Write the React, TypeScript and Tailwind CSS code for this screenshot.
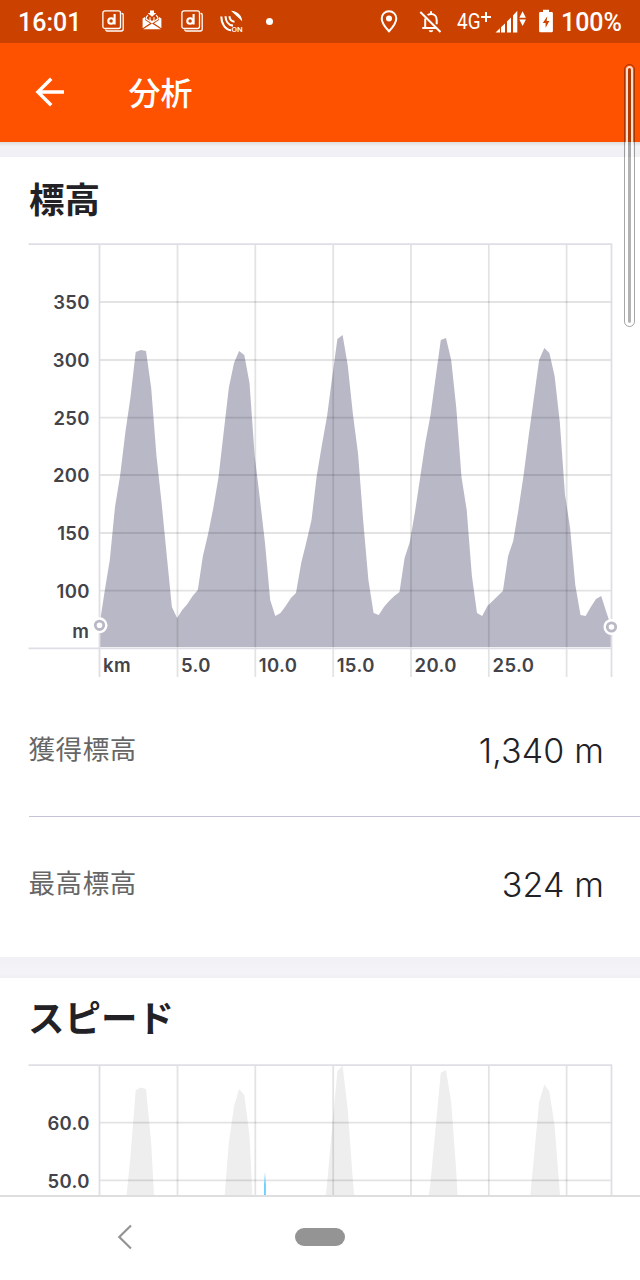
import type { ReactNode } from "react";

const PLOT_LEFT = 99.5;
const PLOT_WIDTH = 512;
const LINES_X = [177.5, 255.3, 333.2, 411, 488.8, 566.6];

// Depth of each sample below the top edge of the elevation plot
const profile = [
  381, 347, 316, 263, 231, 188, 153, 108, 106, 107,
  144, 211, 259, 311, 363, 374, 366, 360, 352, 346,
  312, 290, 264, 234, 189, 144, 119, 107, 111, 139,
  212, 254, 299, 356, 372, 369, 362, 354, 349, 319,
  298, 276, 232, 201, 172, 133, 95, 91, 121, 170,
  210, 278, 336, 369, 371, 363, 357, 352, 348, 314,
  298, 268, 234, 199, 171, 133, 96, 94, 116, 164,
  233, 266, 332, 369, 372, 362, 357, 352, 347, 312,
  297, 266, 231, 191, 154, 116, 104, 109, 132, 178,
  251, 284, 341, 371, 372, 363, 355, 352, 368, 383
];

const elevationTicks = [
  { label: "350", y: 58 },
  { label: "300", y: 116 },
  { label: "250", y: 173.7 },
  { label: "200", y: 231 },
  { label: "150", y: 289 },
  { label: "100", y: 346.7 }
];

const speedTicks = [
  { label: "60.0", y: 57.7 },
  { label: "50.0", y: 115.4 }
];

const distanceTicks = ["km", "5.0", "10.0", "15.0", "20.0", "25.0"];

const areaPath = (base: number, toY: (v: number) => number) => {
  const step = PLOT_WIDTH / (profile.length - 1);
  const points = profile.map((v, i) => `${(PLOT_LEFT + i * step).toFixed(1)} ${toY(v).toFixed(1)}`);
  return `M${PLOT_LEFT} ${base}L${points.join("L")}L${PLOT_LEFT + PLOT_WIDTH} ${base}Z`;
};

const Marker = ({ x, y }: { x: number; y: number }) => (
  <g>
    <circle cx={x} cy={y} r="8" fill="#fff" />
    <circle cx={x} cy={y} r="4.2" fill="#fff" stroke="#b9b8c6" strokeWidth="2.8" />
  </g>
);

const TickLabel = ({ x, y, end, children }: { x: number; y: number; end?: boolean; children: ReactNode }) => (
  <text
    x={x}
    y={y}
    textAnchor={end ? "end" : "start"}
    className="font-['Inter',sans-serif] text-[18.5px] font-semibold tracking-[.35px]"
    fill="#434349"
  >
    {children}
  </text>
);

const ElevationChart = () => (
  <svg width="640" height="436" viewBox="0 -1 640 436" className="block">
    <path d={areaPath(403, (v) => v)} fill="#b9b8c6" />
    <g stroke="#000" strokeOpacity="0.11" strokeWidth="1.8">
      {elevationTicks.map((t) => (
        <line key={t.label} x1="100" x2="611" y1={t.y} y2={t.y} />
      ))}
      {LINES_X.map((x) => (
        <line key={x} x1={x} x2={x} y1="1" y2="433" />
      ))}
    </g>
    <g stroke="#dfdee7" strokeWidth="1.8">
      <path d="M28.5 .2H612.3M28.5 404.3H612M99.5 0V433M611.5 0V433" fill="none" />
    </g>
    {elevationTicks.map((t) => (
      <TickLabel key={t.label} x={89.9} y={t.y + 7.3} end>{t.label}</TickLabel>
    ))}
    <TickLabel x={89.3} y={394} end>m</TickLabel>
    {distanceTicks.map((label, i) => (
      <TickLabel key={label} x={103 + i * 77.9} y={428}>{label}</TickLabel>
    ))}
    <Marker x={99.5} y={381.3} />
    <Marker x={611.5} y={383} />
  </svg>
);

const SpeedChart = () => (
  <svg width="640" height="132" viewBox="0 -1 640 132" className="block">
    <path d={areaPath(600, (v) => (v - 91) * 1.46 + 0.5)} fill="#eee" />
    <g stroke="#000" strokeOpacity="0.11" strokeWidth="1.8">
      {speedTicks.map((t) => (
        <line key={t.label} x1="100" x2="611" y1={t.y} y2={t.y} />
      ))}
      {LINES_X.map((x) => (
        <line key={x} x1={x} x2={x} y1="1" y2="140" />
      ))}
    </g>
    <path d="M28.5 .1H612.3M99.5 0V140M611.5 0V140" stroke="#dfdee7" strokeWidth="1.8" fill="none" />
    <defs>
      <linearGradient id="spike" x1="0" x2="0" y1="0" y2="1">
        <stop offset="0" stopColor="#6fd0fb" stopOpacity="0" />
        <stop offset="0.5" stopColor="#6fd0fb" />
      </linearGradient>
    </defs>
    <rect x="264" y="107" width="1.9" height="25" fill="url(#spike)" />
    {speedTicks.map((t) => (
      <TickLabel key={t.label} x={89.9} y={t.y + 7.3} end>{t.label}</TickLabel>
    ))}
  </svg>
);

const MusicIcon = () => (
  <svg width="22" height="22" viewBox="0 0 22 22" fill="none" stroke="#fff" strokeWidth="1.3">
    <rect x=".9" y=".9" width="17.6" height="17.6" rx="2" />
    <path d="M19.5 3.5H20a1.2 1.2 0 0 1 1.2 1.2V19a2 2 0 0 1-2 2H5a1.2 1.2 0 0 1-1.2-1.2V19.5" />
    <circle cx="9.1" cy="11" r="2.8" strokeWidth="2.1" />
    <path d="M12.6 4v10.5" strokeWidth="2.1" />
  </svg>
);

const MailIcon = () => (
  <svg width="20" height="20" viewBox="0 0 20 20">
    <path d="M.6 8.600 3 7v3l5 3.300-7.400 5zM19.400 8.600 17 7v3l-5 3.300 7.400 5z" fill="#fff" />
    <path d="M1.200 19.200 10 13.400l8.800 5.800z" fill="#fff" />
    <path d="M8 .6h4V3h2.300L10 6.800 5.700 3H8z" fill="#fff" />
    <path d="M6 5.200C4.500 6 4 7.200 4 8.800L10 12.700l6-3.900c0-1.600-.5-2.800-2-3.600" stroke="#fff" strokeWidth="1.300" fill="none" />
    <path d="M8 7.300v2.200c0 .8.800 1.400 2 2.200 1.200-.8 2-1.400 2-2.200V7.300" stroke="#fff" strokeWidth="1.100" fill="none" />
  </svg>
);

const AntennaIcon = () => (
  <svg width="24" height="23" viewBox="0 0 24 23">
    <path d="M11 .7C17.5 1 22 5.2 22.200 11.3z" fill="#fff" />
    <g fill="none" stroke="#fff" strokeWidth="2.100">
      <path d="M1.300 6.500C1.300 13.500 5 19.600 11 20.300" />
      <path d="M5.500 6.200c.2 5 3 9 7.500 9.400" />
      <path d="M9.500 6.200c.2 3 2 5.200 5 5.500" />
    </g>
    <text x="11.600" y="22.400" className="font-['Roboto',sans-serif] text-[8px] font-medium" fill="#fff">ON</text>
  </svg>
);

const PinIcon = () => (
  <svg width="18" height="24" viewBox="0 0 18 24" fill="none">
    <path d="M9 1.300C4.800 1.300 1.700 4.500 1.700 8.500 1.700 13.500 9 21.300 9 21.300s7.300-7.800 7.300-12.800C16.300 4.500 13.200 1.300 9 1.300z" stroke="#fff" strokeWidth="2" />
    <circle cx="9" cy="8.500" r="3" fill="#fff" />
  </svg>
);

const BellOffIcon = () => (
  <svg width="23" height="23" viewBox="0 0 23 23" fill="none" stroke="#fff" strokeWidth="2">
    <path d="M1.300 2 21.500 22" />
    <path d="M6.200 8.500V17.300M3.300 18H17M8.700 5.200C9.500 4.300 10.600 3.900 12 3.900c3.500 0 5.700 2.500 5.700 6v4.300M12 4V1.200" />
    <path d="M9.800 20.200h4.400c0 1.300-1 2-2.200 2s-2.200-.7-2.200-2z" fill="#fff" stroke="none" />
  </svg>
);

const SignalIcon = () => (
  <svg width="32" height="23" viewBox="0 0 32 23" fill="#fff">
    <path d="M.5 22.500 5 18.300v4.200zM6 17.300l4-3.900v9.100H6zM12 11.400l4-3.900v15h-4zM18 5.500l4.300-4.700v21.700H18z" />
    <path d="M24.300 7.800 27.600 1.300l3.300 6.500zM24.300 9.600h6.600l-3.300 6.500z" />
  </svg>
);

const BatteryIcon = () => (
  <svg width="14" height="24" viewBox="0 0 14 24">
    <path d="M4 .7h6v2.200h2.600A1.300 1.300 0 0 1 13.900 4.200V22a1.300 1.300 0 0 1-1.300 1.300H1.400A1.300 1.300 0 0 1 .1 22V4.200a1.300 1.300 0 0 1 1.300-1.300H4z" fill="#fff" />
    <path d="M8.300 7.200 3.800 14h2.800v4.700L10.400 12H7.700z" fill="#cc4400" />
  </svg>
);

const StatusBar = () => (
  <header className="flex h-[42.5px] shrink-0 items-center bg-[#cb4200] font-['Roboto',sans-serif] text-white">
    <span className="ml-[18px] w-[84px] pt-[2px] text-[25px] leading-none font-medium">16:01</span>
    <div className="flex items-center">
      <MusicIcon />
      <div className="ml-[18px] -mt-[3px]"><MailIcon /></div>
      <div className="ml-[18.5px]"><MusicIcon /></div>
      <div className="ml-[17px]"><AntennaIcon /></div>
      <span className="ml-[22px] size-[7px] rounded-full bg-white" />
    </div>
    <div className="ml-auto flex items-center pr-[18px]">
      <div className="pt-px"><PinIcon /></div>
      <div className="ml-[21px]"><BellOffIcon /></div>
      <div className="ml-[15px] flex w-[38px] items-start whitespace-nowrap">
        <span className="w-[23px] origin-left scale-x-[.86] pt-px text-[22px] leading-[24px]">4G</span>
        <svg width="12" height="12" viewBox="0 0 12 12" className="mt-[2px]">
          <path d="M6 1v10M1 6h10" stroke="#fff" strokeWidth="2" />
        </svg>
      </div>
      <SignalIcon />
      <div className="ml-[12px]"><BatteryIcon /></div>
      <span className="ml-[8px] pt-[2px] text-[25px] leading-none font-medium">100%</span>
    </div>
  </header>
);

const StatRow = ({ label, value }: { label: string; value: string }) => (
  <div className="flex h-[133px] items-center justify-between pr-[36px]">
    <span className="pb-[3px] text-[26.5px] tracking-[.6px] text-[#666]">{label}</span>
    <span className="pt-[2px] font-['Inter',sans-serif] text-[34px] font-[350] tracking-[.15px] text-[#222226]">{value}</span>
  </div>
);

export default function App() {
  return (
    <div className="relative flex h-[1280px] w-[640px] flex-col overflow-hidden bg-white font-['Noto_Sans_CJK_JP',sans-serif]">
      <StatusBar />
      <div className="flex h-[99.5px] shrink-0 items-center bg-[#ff5200] text-white">
        <svg width="30" height="30" viewBox="0 0 30 30" fill="none" stroke="#fff" strokeWidth="3.400" className="ml-[35px]">
          <path d="M29 15H3M16.200 1.700 2.900 15l13.300 13.300" />
        </svg>
        <h1 className="ml-[63.5px] pb-[3px] text-[32px] leading-none font-medium">分析</h1>
      </div>

      <main className="flex min-h-0 flex-1 flex-col overflow-hidden">
        <div className="h-[15px] shrink-0 bg-linear-to-b from-[#dededf] via-[#f3f3f6] via-30% to-[#f0f0f5]" />
        <section className="h-[800px] shrink-0">
          <h2 className="flex h-[86px] items-center pb-[4px] pl-[29px] text-[35.5px] font-bold text-[#222226]">標高</h2>
          <ElevationChart />
          <div className="mt-[3.5px] pl-[28.5px]">
            <StatRow label="獲得標高" value="1,340 m" />
            <div className="h-px bg-[#c5c3d8]" />
            <StatRow label="最高標高" value="324 m" />
          </div>
        </section>
        <div className="h-[20.5px] shrink-0 bg-linear-to-b from-[#f0f0f5] via-[#f4f4f8] via-75% to-[#f1f1f5]" />
        <section className="min-h-0 flex-1">
          <h2 className="flex h-[86px] items-center pb-[6px] pl-[28px] text-[36.5px] font-bold text-[#222226]">スピード</h2>
          <SpeedChart />
        </section>
      </main>

      <nav className="flex h-[85px] shrink-0 items-center border-t-2 border-[#dedede] bg-white pb-[3px]">
        <svg width="16" height="26" viewBox="0 0 16 26" fill="none" stroke="#949494" strokeWidth="2.200" className="ml-[117px]">
          <path d="M14 1.500 2.300 13 14 24.500" />
        </svg>
        <div className="ml-[162px] h-[18px] w-[50px] rounded-full bg-[#949494]" />
      </nav>

      {/* Scroll indicator, floats over the toolbar and the page */}
      <div className="absolute top-[64px] left-[624px] h-[263px] w-[10.5px] rounded-full border border-black/35 p-px">
        <div className="h-full rounded-full border-2 border-white/80 bg-black/30 bg-clip-padding" />
      </div>
    </div>
  );
}
